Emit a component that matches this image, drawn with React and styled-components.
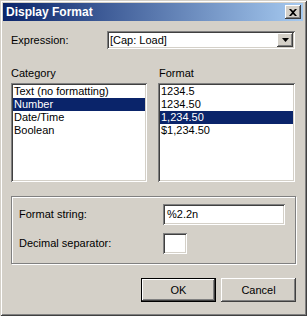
import React from "react";
import styled, { createGlobalStyle, css } from "styled-components";

const Global = createGlobalStyle`
  html, body { margin: 0; padding: 0; background: #d4d0c8; }
  body { font-family: "Liberation Sans", Arial, sans-serif; font-size: 11px; color: #000; }
  * { box-sizing: border-box; }
`;

const raised = css`
  background: #d4d0c8;
  box-shadow: inset -1px -1px #404040, inset 1px 1px #ffffff, inset -2px -2px #808080, inset 2px 2px #d4d0c8;
`;
const sunken = css`
  background: #fff;
  box-shadow: inset 1px 1px #808080, inset -1px -1px #ffffff, inset 2px 2px #404040, inset -2px -2px #d4d0c8;
`;

const Window = styled.div`
  width: 307px;
  height: 316px;
  background: #d4d0c8;
  padding: 3px 4px 3px 3px;
  box-shadow: inset 1px 1px #d4d0c8, inset -1px -1px #404040, inset 2px 2px #ffffff, inset -2px -2px #808080;
  display: flex;
  flex-direction: column;
`;

const TitleBar = styled.div`
  height: 18px;
  background: linear-gradient(to right, #0a246a, #a6caf0);
  display: flex;
  align-items: center;
  justify-content: space-between;
  padding: 0 2px 0 3px;
`;

const Title = styled.span`
  color: #fff;
  font-weight: bold;
  font-size: 12px;
`;

const CloseBtn = styled.div`
  ${raised};
  width: 16px;
  height: 14px;
  display: flex;
  align-items: center;
  justify-content: center;
`;

const Body = styled.div`
  padding: 10px 7px 0 8px;
  display: flex;
  flex-direction: column;
`;

const ExprRow = styled.div`
  display: flex;
  align-items: center;
  height: 18px;
`;

const Label = styled.span`
  display: block;
  width: ${(p) => p.$w || "auto"};
  padding-left: ${(p) => p.$pl || 0}px;
  line-height: 13px;
  white-space: nowrap;
`;

const Combo = styled.div`
  ${sunken};
  width: 188px;
  height: 18px;
  display: flex;
  align-items: center;
  justify-content: space-between;
  padding: 2px 2px 2px 3px;
`;

const ComboText = styled.span`
  line-height: 14px;
`;

const DropBtn = styled.div`
  ${raised};
  width: 16px;
  height: 14px;
  display: flex;
  align-items: center;
  justify-content: center;
`;

const Columns = styled.div`
  margin-top: 18px;
  display: grid;
  grid-template-columns: 136px 137px;
  column-gap: 11px;
`;

const Column = styled.div`
  display: flex;
  flex-direction: column;
  gap: 3px;
`;

const ListBox = styled.div`
  ${sunken};
  height: 99px;
  padding: 2px;
  display: flex;
  flex-direction: column;
`;

const Item = styled.div`
  height: 13px;
  line-height: 13px;
  padding-left: 1px;
  white-space: nowrap;
  background: ${(p) => (p.$sel ? "#0a246a" : "transparent")};
  color: ${(p) => (p.$sel ? "#fff" : "#000")};
`;

const Group = styled.div`
  margin-top: 14px;
  width: 285px;
  height: 68px;
  border: 1px solid #808080;
  box-shadow: inset 1px 1px #fff, 1px 1px #fff;
  padding: 7px 0 0 7px;
  display: flex;
  flex-direction: column;
  gap: 8px;
`;

const FieldRow = styled.div`
  display: flex;
  align-items: center;
`;

const Edit = styled.div`
  ${sunken};
  width: ${(p) => p.$w}px;
  height: 21px;
  padding: 3px 4px;
  line-height: 14px;
`;

const Buttons = styled.div`
  margin-top: 14px;
  width: 285px;
  display: flex;
  justify-content: flex-end;
  gap: 5px;
`;

const Button = styled.div`
  width: 75px;
  height: 24px;
  display: flex;
  align-items: center;
  justify-content: center;
  background: #d4d0c8;
  box-shadow: ${(p) =>
    p.$default
      ? "inset 0 0 0 1px #000, inset -2px -2px #404040, inset 2px 2px #ffffff, inset -3px -3px #808080"
      : "inset -1px -1px #404040, inset 1px 1px #ffffff, inset -2px -2px #808080, inset 2px 2px #d4d0c8"};
`;

const categories = ["Text (no formatting)", "Number", "Date/Time", "Boolean"];
const formats = ["1234.5", "1234.50", "1,234.50", "$1,234.50"];

export default function App() {
  return (
    <>
      <Global />
      <Window>
        <TitleBar>
          <Title>Display Format</Title>
          <CloseBtn>
            <svg width="8" height="7" viewBox="0 0 8 7">
              <path d="M0 0h2l2 2 2-2h2L5 3.5 8 7H6L4 5 2 7H0l3-3.5z" fill="#000" />
            </svg>
          </CloseBtn>
        </TitleBar>
        <Body>
          <ExprRow>
            <Label $w="96px">Expression:</Label>
            <Combo>
              <ComboText>[Cap: Load]</ComboText>
              <DropBtn>
                <svg width="7" height="4" viewBox="0 0 7 4">
                  <path d="M0 0h7L3.5 4z" fill="#000" />
                </svg>
              </DropBtn>
            </Combo>
          </ExprRow>
          <Columns>
            <Column>
              <Label>Category</Label>
              <ListBox>
                {categories.map((c, i) => (
                  <Item key={c} $sel={i === 1}>{c}</Item>
                ))}
              </ListBox>
            </Column>
            <Column>
              <Label $pl={1}>Format</Label>
              <ListBox>
                {formats.map((f, i) => (
                  <Item key={f} $sel={i === 2}>{f}</Item>
                ))}
              </ListBox>
            </Column>
          </Columns>
          <Group>
            <FieldRow>
              <Label $w="144px">Format string:</Label>
              <Edit $w={122}>%2.2n</Edit>
            </FieldRow>
            <FieldRow>
              <Label $w="144px">Decimal separator:</Label>
              <Edit $w={24} />
            </FieldRow>
          </Group>
          <Buttons>
            <Button $default>OK</Button>
            <Button>Cancel</Button>
          </Buttons>
        </Body>
      </Window>
    </>
  );
}
